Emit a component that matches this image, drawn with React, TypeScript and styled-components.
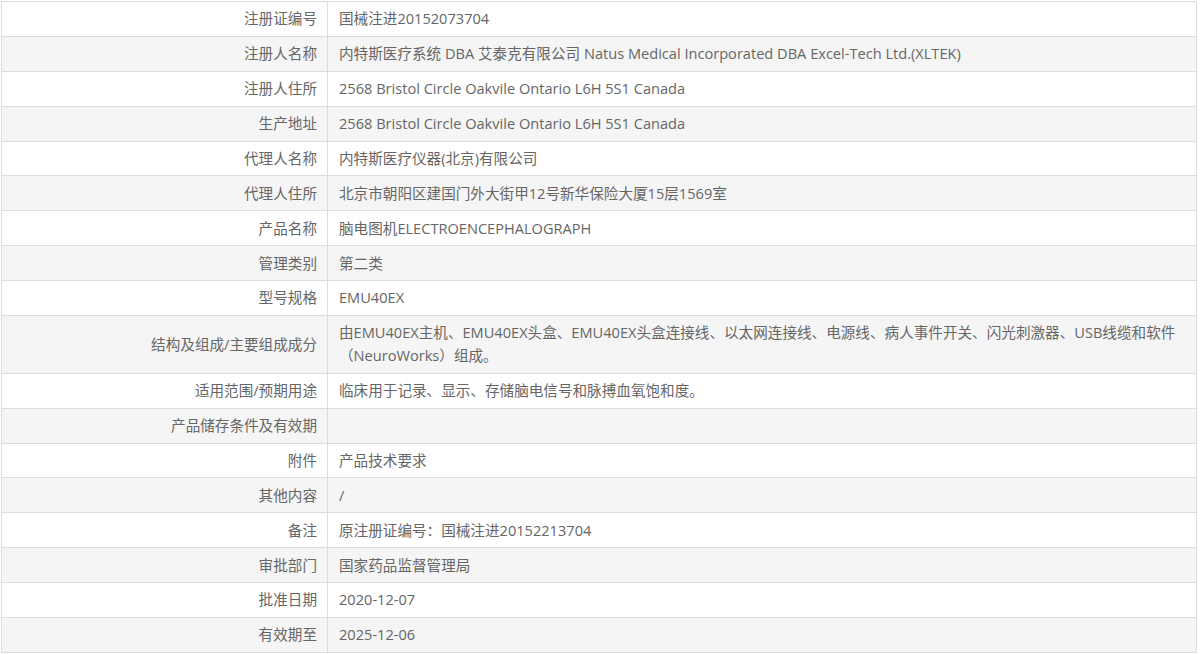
import React from "react";
import styled, { createGlobalStyle } from "styled-components";

const Global = createGlobalStyle`
  html, body { margin: 0; padding: 0; background: #fff; }
  body { font-family: "Open Sans", "Noto Sans CJK SC", sans-serif; }
`;

const Page = styled.div`
  padding: 1px 0 0 1px;
`;

const Table = styled.table`
  width: 1196px;
  border-collapse: collapse;
  table-layout: fixed;
  font-size: 14.6px;
  color: #666;
`;

const Row = styled.tr<{ $alt: boolean }>`
  background: ${(p) => (p.$alt ? "#f5f5f5" : "#ffffff")};
`;

const Label = styled.td`
  width: 326px;
  box-sizing: border-box;
  border: 1px solid #dcdcdc;
  text-align: right;
  padding: 5.45px 10px 5.45px 10px;
  line-height: 23px;
  vertical-align: middle;
`;

const Value = styled.td`
  border: 1px solid #dcdcdc;
  text-align: left;
  padding: 5.45px 10px 5.45px 11px;
  line-height: 23px;
  vertical-align: middle;
`;

const rows: [string, string][] = [
  ["注册证编号", "国械注进20152073704"],
  ["注册人名称", "内特斯医疗系统 DBA 艾泰克有限公司 Natus Medical Incorporated DBA Excel-Tech Ltd.(XLTEK)"],
  ["注册人住所", "2568 Bristol Circle Oakvile Ontario L6H 5S1 Canada"],
  ["生产地址", "2568 Bristol Circle Oakvile Ontario L6H 5S1 Canada"],
  ["代理人名称", "内特斯医疗仪器(北京)有限公司"],
  ["代理人住所", "北京市朝阳区建国门外大街甲12号新华保险大厦15层1569室"],
  ["产品名称", "脑电图机ELECTROENCEPHALOGRAPH"],
  ["管理类别", "第二类"],
  ["型号规格", "EMU40EX"],
  ["结构及组成/主要组成成分", "由EMU40EX主机、EMU40EX头盒、EMU40EX头盒连接线、以太网连接线、电源线、病人事件开关、闪光刺激器、USB线缆和软件（NeuroWorks）组成。"],
  ["适用范围/预期用途", "临床用于记录、显示、存储脑电信号和脉搏血氧饱和度。"],
  ["产品储存条件及有效期", ""],
  ["附件", "产品技术要求"],
  ["其他内容", "/"],
  ["备注", "原注册证编号：国械注进20152213704"],
  ["审批部门", "国家药品监督管理局"],
  ["批准日期", "2020-12-07"],
  ["有效期至", "2025-12-06"],
];

export default function App() {
  return (
    <Page>
      <Global />
      <Table>
        <tbody>
          {rows.map(([k, v], i) => (
            <Row key={k} $alt={i % 2 === 1}>
              <Label>{k}</Label>
              <Value>{v}</Value>
            </Row>
          ))}
        </tbody>
      </Table>
    </Page>
  );
}
